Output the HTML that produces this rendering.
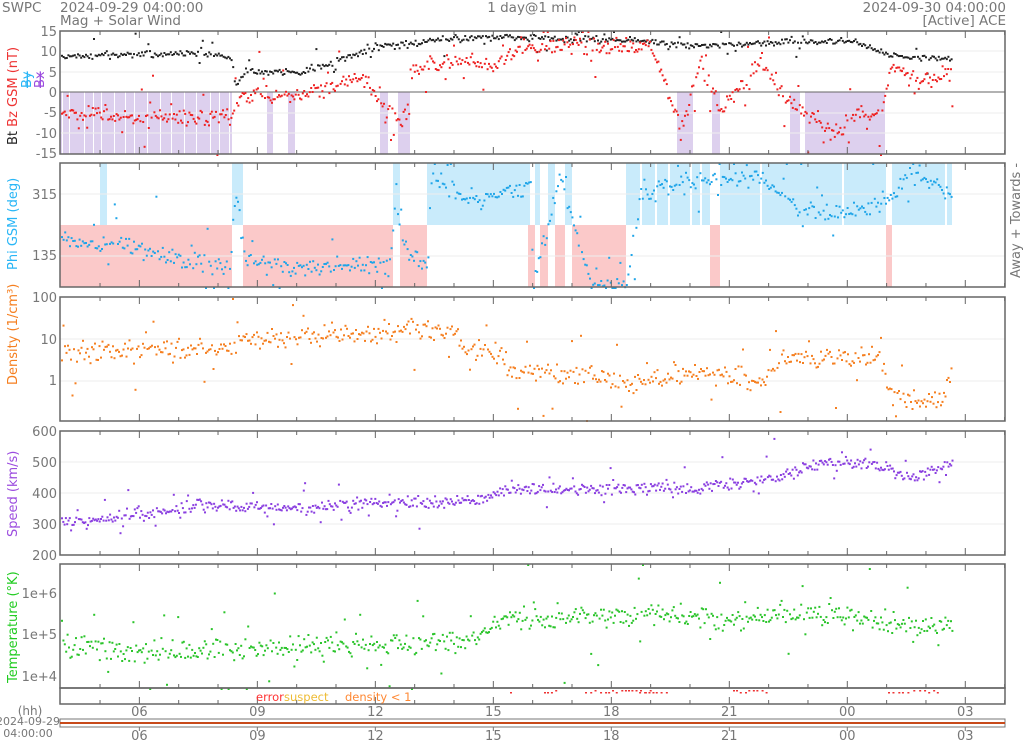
<!DOCTYPE html>
<html><head><meta charset="utf-8"><style>
body{margin:0;background:#fff;width:1024px;height:741px;overflow:hidden;font-family:"DejaVu Sans","Liberation Sans",sans-serif}
svg text{font-family:"DejaVu Sans","Liberation Sans",sans-serif}
</style></head><body>
<svg id="s" width="1024" height="741" viewBox="0 0 1024 741" xmlns="http://www.w3.org/2000/svg">
<g fill="#777" font-size="13.5">
<text x="2" y="12">SWPC</text>
<text x="60" y="12">2024-09-29 04:00:00</text>
<text x="60" y="25">Mag + Solar Wind</text>
<text x="532" y="12" text-anchor="middle">1 day@1 min</text>
<text x="1006" y="12" text-anchor="end">2024-09-30 04:00:00</text>
<text x="1006" y="25" text-anchor="end">[Active] ACE</text>
</g>
<g id="bg"></g>
<g id="grid"></g>
<g id="dots"></g>
<g id="frame"></g>
<g font-size="13" fill="#777" text-anchor="end">
<text x="57" y="36">15</text><text x="57" y="56">10</text><text x="57" y="77">5</text><text x="57" y="97">0</text><text x="57" y="117">-5</text><text x="57" y="138">-10</text><text x="57" y="158">-15</text>
<text x="57" y="199">315</text><text x="57" y="260">135</text>
<text x="57" y="302">100</text><text x="57" y="344">10</text><text x="57" y="385">1</text>
<text x="57" y="436">600</text><text x="57" y="467">500</text><text x="57" y="498">400</text><text x="57" y="529">300</text><text x="57" y="560">200</text>
<text x="57" y="598">1e+6</text><text x="57" y="639">1e+5</text><text x="57" y="681">1e+4</text>
</g>
<g font-size="13">
<text transform="translate(17,145) rotate(-90)"><tspan fill="#222">Bt </tspan><tspan fill="#e33"> Bz GSM (nT)</tspan></text>
<text transform="translate(31,88) rotate(-90)" fill="#29b6f6" text-decoration="line-through">By</text>
<text transform="translate(44,88) rotate(-90)" fill="#9c4ddf" text-decoration="line-through">Bx</text>
<text transform="translate(17,270) rotate(-90)" fill="#29b6f6">Phi GSM (deg)</text>
<text transform="translate(17,385) rotate(-90)" fill="#f57f20">Density (1/cm³)</text>
<text transform="translate(17,537) rotate(-90)" fill="#9c4ddf">Speed (km/s)</text>
<text transform="translate(17,683) rotate(-90)" fill="#2c2">Temperature (°K)</text>
<text transform="translate(1020,278) rotate(-90)" fill="#777">Away +  Towards -</text>
</g>
<g font-size="11.5"><text x="256" y="701" fill="#f33">error</text><text x="284" y="701" fill="#eb3">suspect</text><text x="345" y="701" fill="#f83">density &lt; 1</text></g>
<g font-size="13" fill="#777" text-anchor="middle" id="xl"></g>
<text x="30" y="715" font-size="12" fill="#777" text-anchor="middle">(hh)</text>
<text x="28" y="725" font-size="11" fill="#777" text-anchor="middle">2024-09-29</text>
<text x="28" y="737" font-size="11" fill="#777" text-anchor="middle">04:00:00</text>
<rect x="60" y="719" width="945" height="8" fill="#fff" stroke="#777"/>
<rect x="60" y="722" width="945" height="2" fill="#c84a1a"/>
</svg>
<script>
var S=document.getElementById('s'),ns='http://www.w3.org/2000/svg';
function el(g,t,a){var e=document.createElementNS(ns,t);for(var k in a)e.setAttribute(k,a[k]);document.getElementById(g).appendChild(e);return e;}
var seed=7;function r(){seed=(seed*16807)%2147483647;return seed/2147483647;}
function n(){return (r()+r()+r()-1.5);}
var P=[[31,154],[163,287],[297,421],[431,555],[564,688],[688,704]];
var L=60,R=1005;
function hx(h){return 60.7+(h-4)*39.33;}
var pur=[[60,232],[267,273],[288,295],[380,388],[398,410],[677,693],[712,720],[790,800],[805,885]];
pur.forEach(function(a){el('bg','rect',{x:a[0],y:92,width:a[1]-a[0],height:62,fill:'#ddd0ee'});});
for(var x=62;x<232;x+=7+Math.floor(r()*9))el('bg','rect',{x:x,y:92,width:1,height:62,fill:'#fff'});
var pink=[[60,232],[243,393],[400,427],[528,535],[540,548],[555,565],[572,626],[710,720],[886,892]];
pink.forEach(function(a){el('bg','rect',{x:a[0],y:225,width:a[1]-a[0],height:62,fill:'#fbc9c9'});});
var blue=[[100,107],[232,243],[393,400],[427,530],[535,540],[548,555],[565,572],[626,710],[720,886],[892,952]];
blue.forEach(function(a){el('bg','rect',{x:a[0],y:163,width:a[1]-a[0],height:62,fill:'#c9ebfb'});});
[640,655,668,690,700,760,842,945].forEach(function(x){el('bg','rect',{x:x,y:163,width:2,height:62,fill:'#fff'});});
[51,72,113,133].forEach(function(y){el('grid','line',{x1:L,x2:R,y1:y,y2:y,stroke:'#eee'});});
el('grid','line',{x1:L,x2:R,y1:92,y2:92,stroke:'#666'});
[194,256,462,493,524,381,339].forEach(function(y){el('grid','line',{x1:L,x2:R,y1:y,y2:y,stroke:'#eee'});});
P.forEach(function(p,i){
 el('frame','rect',{x:L,y:p[0],width:R-L,height:p[1]-p[0],fill:'none',stroke:'#666','stroke-width':1.5});
 for(var h=5;h<=28;h++){var x=hx(h),len=(h%3==0)?7:4;
  el('frame','line',{x1:x,x2:x,y1:p[1],y2:p[1]-len,stroke:'#666'});
  if(i<5)el('frame','line',{x1:x,x2:x,y1:p[0],y2:p[0]+len,stroke:'#666'});}
});
el('frame','line',{x1:L,x2:R,y1:727,y2:727,stroke:'#777'});
var lab=['06','09','12','15','18','21','00','03'];
for(var i=0;i<8;i++){var x=hx(6+3*i);
 var t=el('xl','text',{x:x,y:716});t.textContent=lab[i];
 t=el('xl','text',{x:x,y:740});t.textContent=lab[i];
 el('frame','line',{x1:x,x2:x,y1:727,y2:731,stroke:'#777'});}
function interp(pts,x){for(var i=0;i<pts.length-1;i++){if(x<=pts[i+1][0]){var a=pts[i],b=pts[i+1];return a[1]+(b[1]-a[1])*(x-a[0])/(b[0]-a[0]);}}return pts[pts.length-1][1];}
function plot(pts,col,noise,step,out,clip){for(var x=61;x<952;x+=step){var y=interp(pts,x)+n()*noise;if(r()<out)y+=n()*noise*5;if(clip){y=Math.max(clip[0],Math.min(clip[1],y));}
 el('dots','rect',{x:x.toFixed(1),y:y.toFixed(1),width:2,height:2,fill:col});}}
plot([[60,55],[200,52],[230,55],[235,85],[245,70],[300,72],[380,45],[420,42],[440,38],[500,36],[650,40],[700,45],[760,42],[850,40],[890,55],[950,57]],'#222',3,1.6,0.1,[31,154]);
plot([[60,113],[130,116],[230,116],[240,95],[300,95],[360,75],[380,100],[405,125],[410,70],[450,60],[500,65],[520,45],[650,45],[660,70],[680,130],[700,60],[720,110],[760,60],[780,90],[800,115],[840,130],[860,110],[880,120],[890,65],[920,80],[950,70]],'#e22',8,1.4,0.15,[31,154]);
plot([[60,235],[100,245],[110,240],[160,255],[230,265],[235,175],[243,258],[300,268],[390,262],[395,185],[400,240],[427,270],[430,180],[480,200],[530,180],[532,285],[560,175],[590,285],[626,285],[640,190],[700,180],[760,175],[800,210],[850,210],[890,195],[910,170],[950,195]],'#1fa5e8',9,1.6,0.12,[163,287]);
plot([[60,352],[230,348],[235,340],[400,330],[410,327],[455,330],[460,348],[500,352],[510,370],[600,375],[620,385],[700,370],[760,380],[780,358],[880,358],[890,395],[940,400],[950,370]],'#f57f20',10,1.5,0.1,[298,420]);
plot([[60,523],[200,505],[300,508],[400,502],[480,499],[500,489],[540,488],[700,488],[780,475],[820,462],[870,462],[910,478],[950,462]],'#8a3fe0',6,1.3,0.1,[431,555]);
plot([[60,646],[200,652],[300,645],[400,643],[480,636],[500,615],[540,620],[650,612],[720,618],[800,612],[880,618],[920,628],[950,622]],'#2bc42b',11,1.4,0.1,[564,688]);
[[510,2],[544,14],[585,65],[640,30],[733,35],[888,50]].forEach(function(a){for(var x=a[0];x<a[0]+a[1];x+=3+r()*3)el('dots','rect',{x:x,y:690+Math.floor(r()*2)*2,width:2,height:1.5,fill:'#e33'});});
</script>
</body></html>
